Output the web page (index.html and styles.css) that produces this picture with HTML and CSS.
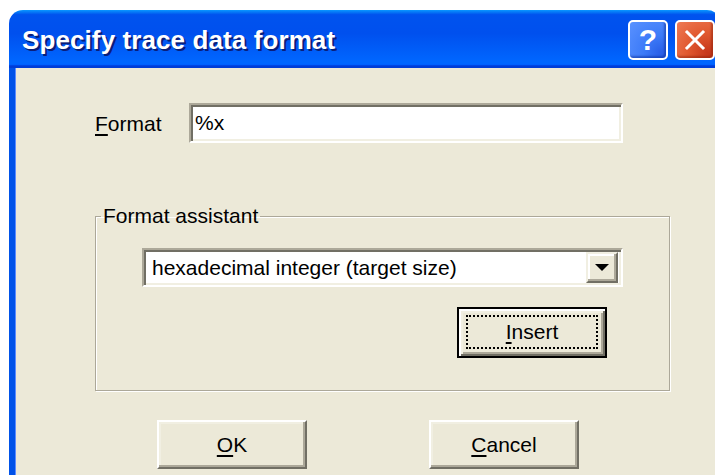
FILE: index.html
```html
<!DOCTYPE html>
<html>
<head>
<meta charset="utf-8">
<title>Specify trace data format</title>
<link rel="stylesheet" href="styles.css">
</head>
<body>
<div class="window">
  <div class="titlebar">
    <span class="title">Specify trace data format</span>
    <div class="caption-buttons">
      <button class="cap cap-help" type="button">?</button>
      <button class="cap cap-close" type="button">
        <svg width="22" height="22" viewBox="0 0 22 22"><path d="M3 3 L19 19 M19 3 L3 19" stroke="#fff" stroke-width="3" stroke-linecap="square"/></svg>
      </button>
    </div>
  </div>
  <div class="client">
    <div class="format-row">
      <label class="field-label"><u>F</u>ormat</label>
      <div class="edit">%x</div>
    </div>

    <fieldset class="group">
      <legend class="group-label">Format assistant</legend>
      <div class="group-body">
        <div class="combo">
          <span class="combo-text">hexadecimal integer (target size)</span>
          <span class="combo-drop">
            <svg width="14" height="8" viewBox="0 0 14 8"><path d="M0 0 H14 L7 7 Z" fill="#000"/></svg>
          </span>
        </div>
        <div class="insert-row">
          <button class="btn btn-default" type="button"><span class="focus-rect"><u>I</u>nsert</span></button>
        </div>
      </div>
    </fieldset>

    <div class="actions">
      <button class="btn btn-ok" type="button"><u>O</u>K</button>
      <button class="btn btn-cancel" type="button"><u>C</u>ancel</button>
    </div>
  </div>
</div>
</body>
</html>
```
FILE: styles.css
```css
html, body {
  margin: 0;
  padding: 0;
  background: #ffffff;
  overflow: hidden;
  width: 715px;
  height: 475px;
}

body {
  font-family: "Liberation Sans", Arial, sans-serif;
  font-size: 21px;
  color: #000;
}

u {
  text-decoration: underline;
  text-underline-offset: 3px;
  text-decoration-thickness: 2px;
}

/* window frame */
.window {
  margin: 10px 0 0 9px;
  width: 712px;
  height: 480px;
  display: flex;
  flex-direction: column;
}

.titlebar {
  height: 58px;
  flex: none;
  display: flex;
  align-items: center;
  padding: 2px 6px 0 13px;
  box-sizing: border-box;
  border-radius: 14px 14px 0 0;
  background: linear-gradient(180deg, #0997ff 0%, #0053ee 8%, #0050ee 40%, #0066ff 88%, #0066ff 93%, #005bff 95%, #003dd7 96%, #003dd7 100%);
}

.title {
  font-weight: bold;
  font-size: 26px;
  color: #fff;
  letter-spacing: 0.1px;
  text-shadow: 2px 2px 0 #0a1e7a;
}

.caption-buttons {
  margin-left: auto;
  display: flex;
  gap: 7px;
}

.cap {
  width: 40px;
  height: 40px;
  padding: 0;
  border: 2px solid #fff;
  border-radius: 5px;
  display: flex;
  align-items: center;
  justify-content: center;
  box-sizing: border-box;
  color: #fff;
  font-family: "Liberation Sans", Arial, sans-serif;
  font-weight: bold;
  font-size: 30px;
  line-height: 1;
}

.cap-help {
  background: radial-gradient(circle at 85% 85%, #2a5fe8 0%, #3d7bf8 40%, #5a92ff 100%);
  box-shadow: inset -2px -2px 2px rgba(0, 30, 140, 0.45);
}

.cap-close {
  background: radial-gradient(circle at 85% 85%, #c6371b 0%, #e0582f 45%, #ef7b55 100%);
  box-shadow: inset -2px -2px 2px rgba(120, 20, 0, 0.4);
}

.client {
  flex: 1;
  background: #ece9d8;
  border-left: 6px solid #0052e8;
  box-shadow: inset 1px 0 0 #5c8cff;
  padding: 35px 0 0 80px;
  box-sizing: border-box;
}

/* format field */
.format-row {
  display: flex;
  align-items: center;
  height: 40px;
}

.field-label {
  width: 94px;
  flex: none;
  padding-top: 1px;
}

.edit {
  width: 434px;
  height: 40px;
  box-sizing: border-box;
  background: #fff;
  border-style: solid;
  border-width: 2px;
  border-color: #aca899 #fff #fff #aca899;
  box-shadow: inset 2px 2px 0 #716f64, inset -2px -2px 0 #f1efe2;
  padding: 5px 0 0 4px;
  line-height: 26px;
}

/* group box */
.group {
  margin: 61px 0 0 0;
  padding: 0;
  width: 575px;
  box-sizing: border-box;
  min-width: 0;
  border: 1px solid #aca899;
  box-shadow: inset 1px 1px 0 #fff, 1px 1px 0 #fff;
}

.group-label {
  margin-left: 5px;
  padding: 0 2px;
  line-height: 24px;
}

.group-body {
  padding: 20px 0 32px 46px;
  width: 481px;
}

.combo {
  height: 39px;
  box-sizing: border-box;
  background: #fff;
  border-style: solid;
  border-width: 2px;
  border-color: #aca899 #fff #fff #aca899;
  box-shadow: inset 2px 2px 0 #716f64, inset -2px -2px 0 #f1efe2;
  display: flex;
  align-items: center;
  padding: 0 3px 0 8px;
}

.combo-text {
  flex: 1;
  padding-top: 1px;
}

.combo-drop {
  width: 32px;
  height: 31px;
  box-sizing: border-box;
  background: #ece9d8;
  border-style: solid;
  border-width: 2px;
  border-color: #f1efe2 #716f64 #716f64 #f1efe2;
  box-shadow: inset -2px -2px 0 #aca899, inset 2px 2px 0 #fff;
  display: flex;
  align-items: center;
  justify-content: center;
  padding-top: 1px;
}

.insert-row {
  display: flex;
  justify-content: flex-end;
  padding-right: 16px;
  margin-top: 20px;
}

/* push buttons */
.btn {
  width: 150px;
  height: 49px;
  box-sizing: border-box;
  background: #ece9d8;
  border-style: solid;
  border-width: 2px;
  border-color: #fff #716f64 #716f64 #fff;
  box-shadow: inset -2px -2px 0 #aca899, inset 2px 2px 0 #f1efe2;
  font-family: "Liberation Sans", Arial, sans-serif;
  font-size: 21px;
  color: #000;
  padding: 0;
  display: flex;
  align-items: center;
  justify-content: center;
}

.btn-default {
  height: 51px;
  border: 2px solid #000;
  box-shadow: inset 2px 2px 0 #fff, inset -2px -2px 0 #716f64, inset 4px 4px 0 #f1efe2, inset -4px -4px 0 #aca899;
  padding: 6px 7px 7px 7px;
}

.focus-rect {
  flex: 1;
  align-self: stretch;
  display: flex;
  align-items: center;
  justify-content: center;
  border: 2px dotted #000;
}

.actions {
  display: flex;
  gap: 122px;
  margin: 29px 0 0 62px;
}
```
